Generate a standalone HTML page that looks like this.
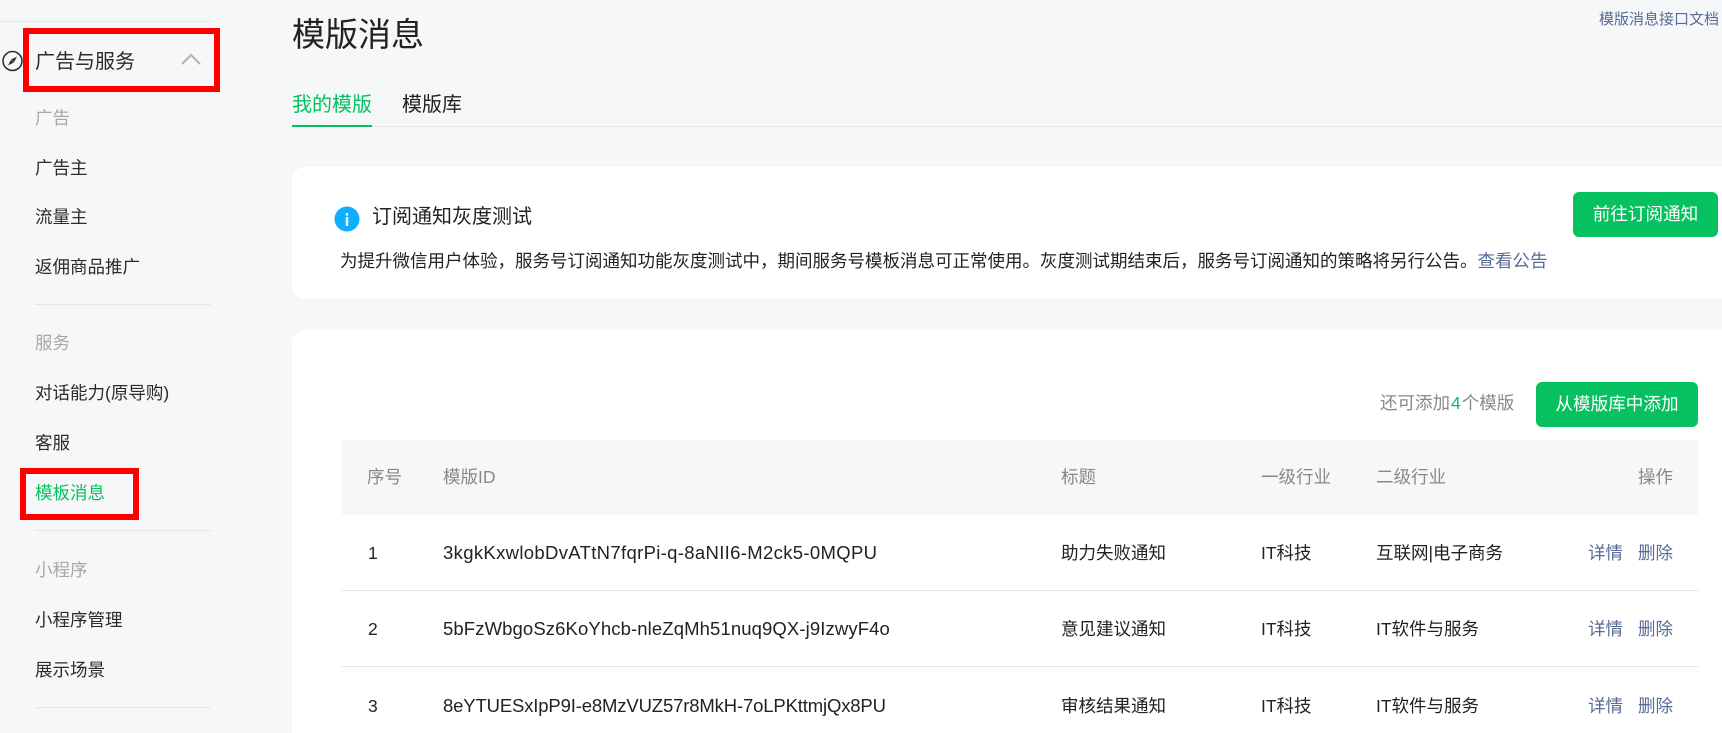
<!DOCTYPE html>
<html lang="zh"><head><meta charset="utf-8"><title>模版消息</title>
<style>
html,body{margin:0;padding:0;width:1722px;height:733px;overflow:hidden;background:#f6f7f9;}
body{position:relative;font-family:"Liberation Sans","Noto Sans CJK SC",sans-serif;color:#2b2b2b;font-size:17.5px;}
.t{position:absolute;white-space:nowrap;line-height:30px;height:30px;}
.g{color:#a8a8a8}.gh{color:#888}.l{color:#576b95}
.b{position:absolute;background:#e5e6e8;height:1px}
.card{position:absolute;background:#fff;left:292px;width:1430px;border-radius:13px 0 0 13px}
.btn{position:absolute;background:#07c160;color:#fff;border-radius:6px;text-align:center;font-size:17.6px}
.red{position:absolute;border:6px solid #f00;box-sizing:border-box}
.id{color:#222;font-size:18.5px}
</style></head><body>
<div class="b" style="left:0;width:211px;top:21px"></div>
<svg style="position:absolute;left:2px;top:50px" width="22" height="22" viewBox="0 0 22 22"><circle cx="10.5" cy="11" r="9.5" fill="none" stroke="#2b2b2b" stroke-width="1.5"/><path d="M15 6.5L12 12.3 9.2 9.5zM6 15.5L9 9.7 11.8 12.5z" fill="#2b2b2b"/></svg>
<div class="t" style="left:35px;top:47px;font-size:20px">广告与服务</div>
<svg style="position:absolute;left:180px;top:52px" width="22" height="14" viewBox="0 0 22 14"><path d="M2 12L11 3l9 9" fill="none" stroke="#b2b2b2" stroke-width="2"/></svg>
<div class="t g" style="left:35px;top:103px">广告</div>
<div class="t" style="left:35px;top:153px">广告主</div>
<div class="t" style="left:35px;top:202px">流量主</div>
<div class="t" style="left:35px;top:252px">返佣商品推广</div>
<div class="b" style="left:35px;width:176px;top:304px"></div>
<div class="t g" style="left:35px;top:328px">服务</div>
<div class="t" style="left:35px;top:378px">对话能力(原导购)</div>
<div class="t" style="left:35px;top:428px">客服</div>
<div class="t" style="left:35px;top:478px;color:#07c160">模板消息</div>
<div class="b" style="left:35px;width:176px;top:530px"></div>
<div class="t g" style="left:35px;top:555px">小程序</div>
<div class="t" style="left:35px;top:605px">小程序管理</div>
<div class="t" style="left:35px;top:655px">展示场景</div>
<div class="b" style="left:35px;width:176px;top:707px"></div>
<div class="red" style="left:23px;top:28px;width:197px;height:64px"></div>
<div class="red" style="left:20px;top:468px;width:119px;height:52px"></div>

<div class="t" style="left:292px;top:11px;font-size:33px;line-height:48px;height:48px;color:#222">模版消息</div>
<div class="t l" style="left:1599px;top:5px;font-size:15px">模版消息接口文档</div>
<div class="t" style="left:292px;top:90px;font-size:20px;color:#07c160">我的模版</div>
<div class="t" style="left:402px;top:90px;font-size:20px;color:#222">模版库</div>
<div class="b" style="left:292px;width:1430px;top:126px"></div>
<div style="position:absolute;left:292px;width:80px;top:125px;height:2px;background:#07c160"></div>

<div class="card" style="top:167px;height:132px"></div>
<svg style="position:absolute;left:334px;top:206px" width="26" height="26" viewBox="0 0 26 26"><circle cx="13" cy="13" r="12.5" fill="#10aeff"/><rect x="11.8" y="7" width="2.4" height="2.6" fill="#fff"/><rect x="11.8" y="11" width="2.4" height="9" fill="#fff"/></svg>
<div class="t" style="left:372px;top:202px;font-size:20px;color:#222">订阅通知灰度测试</div>
<div class="t" style="left:340px;top:246px;color:#222">为提升微信用户体验，服务号订阅通知功能灰度测试中，期间服务号模板消息可正常使用。灰度测试期结束后，服务号订阅通知的策略将另行公告。<span class="l">查看公告</span></div>
<div class="btn" style="left:1573px;top:192px;width:145px;height:45px;line-height:44px">前往订阅通知</div>

<div class="card" style="top:330px;height:403px;border-radius:13px 0 0 0"></div>
<div class="t gh" style="left:1380px;top:388px">还可添加<span style="color:#07c160;padding:0 1px">4</span>个模版</div>
<div class="btn" style="left:1536px;top:382px;width:162px;height:45px;line-height:44px">从模版库中添加</div>
<div style="position:absolute;left:342px;top:440px;width:1356px;height:75px;background:#f6f7f9"></div>
<div class="t gh" style="left:367px;top:462px">序号</div>
<div class="t gh" style="left:443px;top:462px">模版ID</div>
<div class="t gh" style="left:1061px;top:462px">标题</div>
<div class="t gh" style="left:1261px;top:462px">一级行业</div>
<div class="t gh" style="left:1376px;top:462px">二级行业</div>
<div class="t gh" style="left:1638px;top:462px">操作</div>

<div class="t" style="left:368px;top:538px;color:#222">1</div>
<div class="t id" style="left:443px;top:538px;letter-spacing:.33px">3kgkKxwlobDvATtN7fqrPi-q-8aNII6-M2ck5-0MQPU</div>
<div class="t" style="left:1061px;top:538px;color:#222">助力失败通知</div>
<div class="t" style="left:1261px;top:538px;color:#222">IT科技</div>
<div class="t" style="left:1376px;top:538px;color:#222">互联网|电子商务</div>
<div class="t l" style="left:1588px;top:538px">详情</div>
<div class="t l" style="left:1638px;top:538px">删除</div>
<div class="b" style="left:342px;width:1356px;top:590px"></div>

<div class="t" style="left:368px;top:614px;color:#222">2</div>
<div class="t id" style="left:443px;top:614px;letter-spacing:.11px">5bFzWbgoSz6KoYhcb-nleZqMh51nuq9QX-j9IzwyF4o</div>
<div class="t" style="left:1061px;top:614px;color:#222">意见建议通知</div>
<div class="t" style="left:1261px;top:614px;color:#222">IT科技</div>
<div class="t" style="left:1376px;top:614px;color:#222">IT软件与服务</div>
<div class="t l" style="left:1588px;top:614px">详情</div>
<div class="t l" style="left:1638px;top:614px">删除</div>
<div class="b" style="left:342px;width:1356px;top:666px"></div>

<div class="t" style="left:368px;top:691px;color:#222">3</div>
<div class="t id" style="left:443px;top:691px;letter-spacing:-.15px">8eYTUESxIpP9I-e8MzVUZ57r8MkH-7oLPKttmjQx8PU</div>
<div class="t" style="left:1061px;top:691px;color:#222">审核结果通知</div>
<div class="t" style="left:1261px;top:691px;color:#222">IT科技</div>
<div class="t" style="left:1376px;top:691px;color:#222">IT软件与服务</div>
<div class="t l" style="left:1588px;top:691px">详情</div>
<div class="t l" style="left:1638px;top:691px">删除</div>
</body></html>
